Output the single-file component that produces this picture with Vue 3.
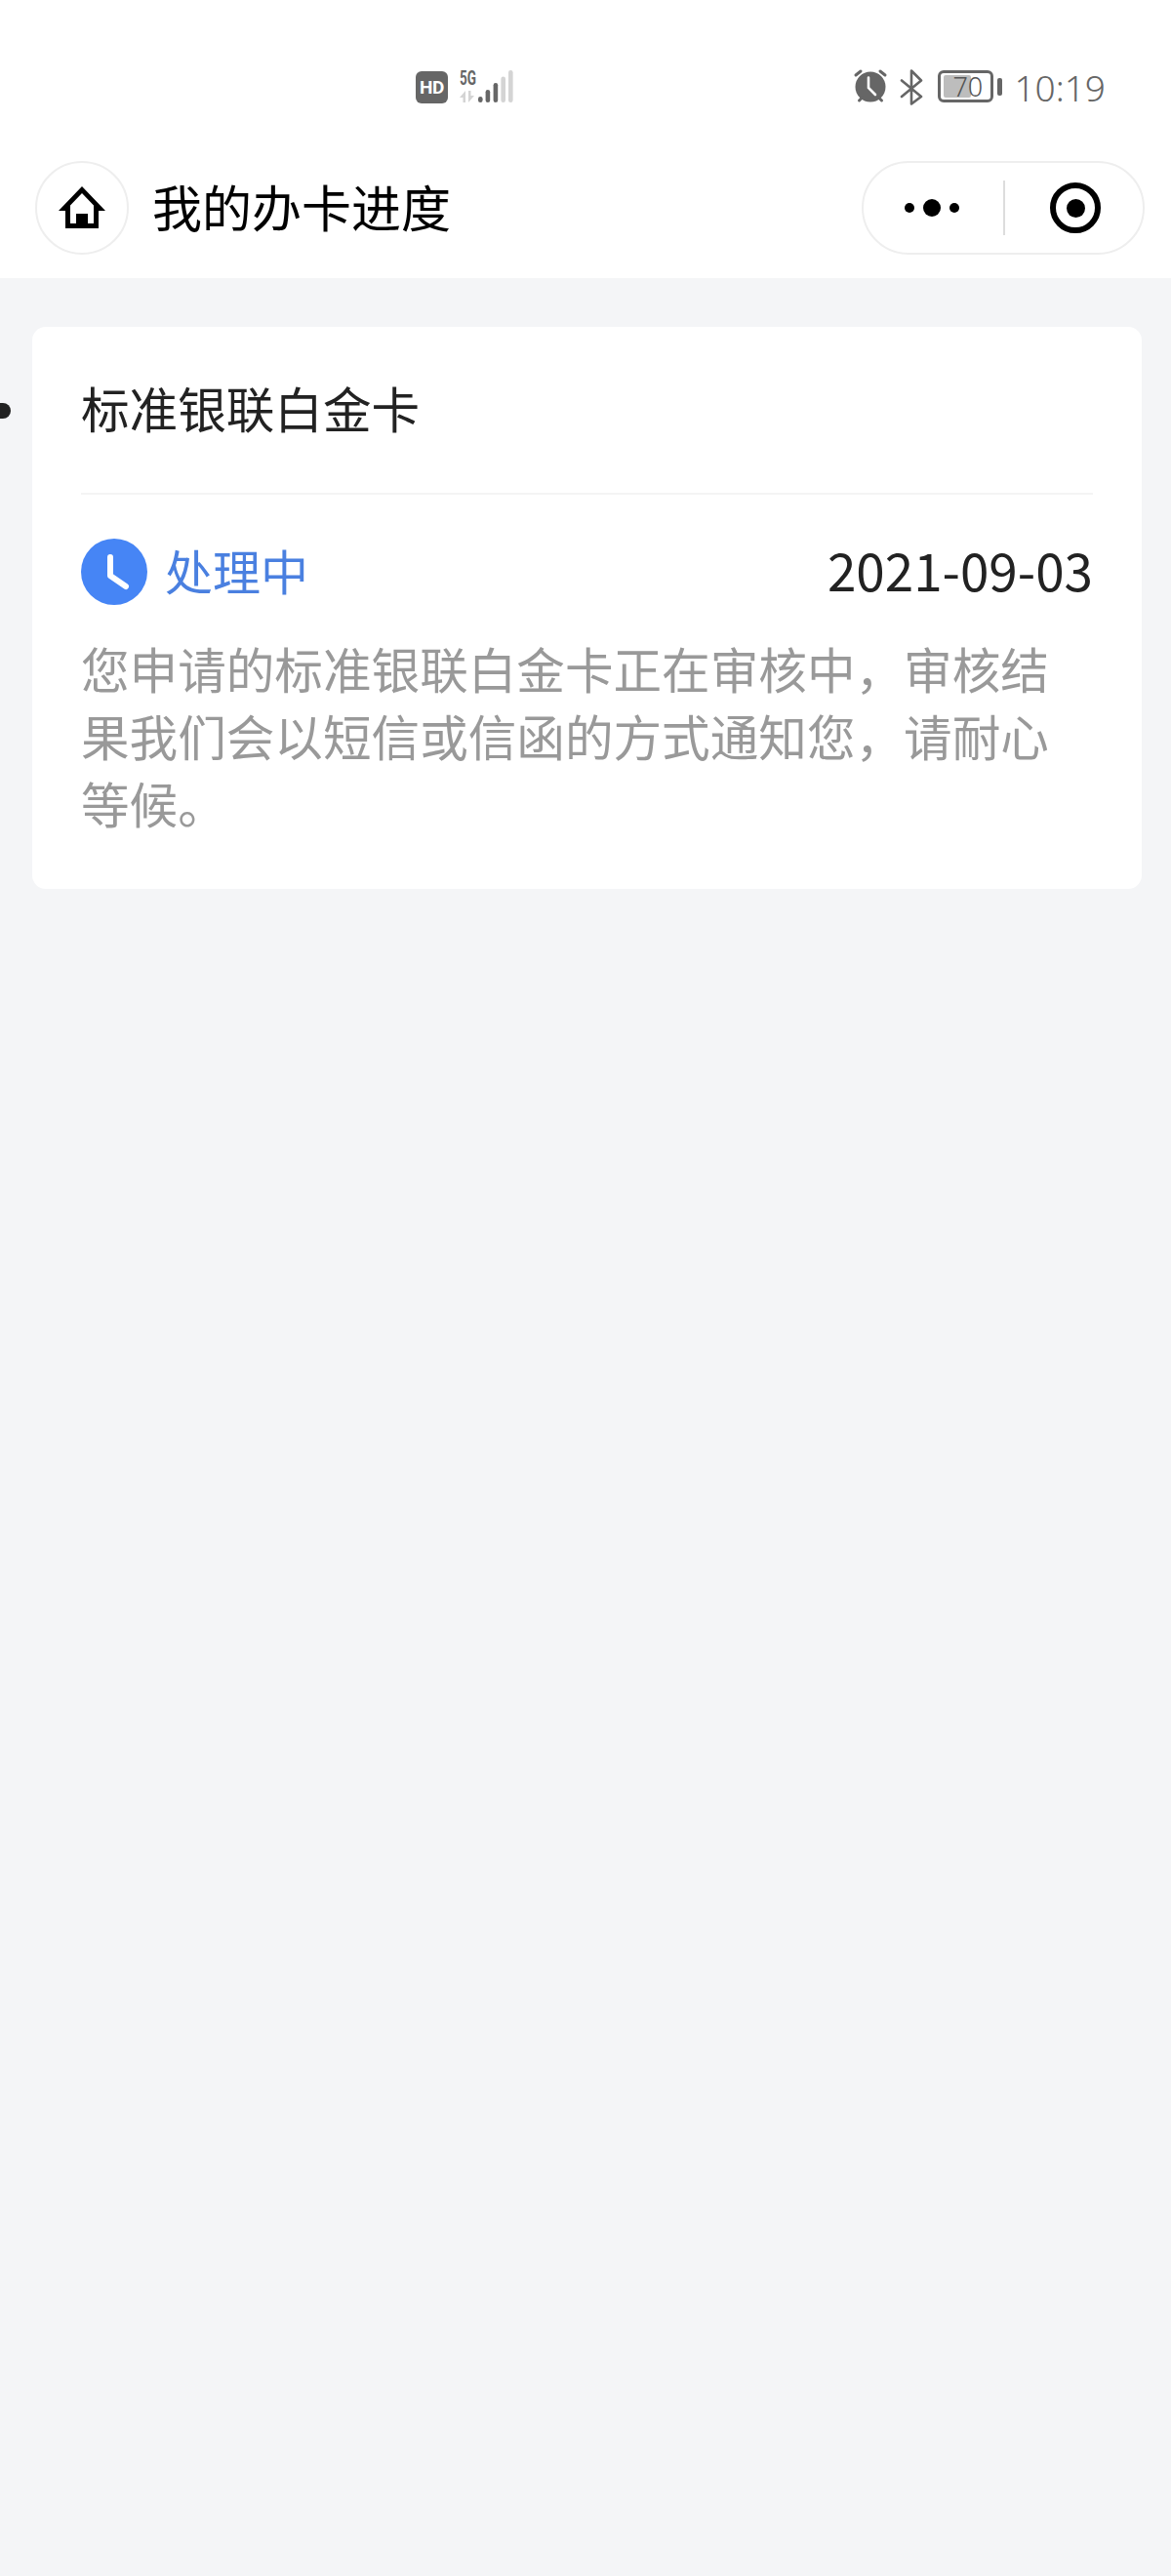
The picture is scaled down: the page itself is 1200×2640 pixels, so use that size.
<template>
  <div class="page">
    <header class="top">
      <div class="status">
        <span class="hd">HD</span>
        <svg class="signal" width="56" height="42" viewBox="0 0 56 42" aria-hidden="true">
          <text x="0" y="23" font-size="20" font-weight="700" fill="#666" font-family="Roboto, sans-serif" textLength="17" lengthAdjust="spacingAndGlyphs">5G</text>
          <g transform="translate(0 6)">
            <path d="M6 23V35H3.500V30H0ZM9 35V23H11.500V28H15Z" fill="#d4d4d4" />
            <rect x="19" y="29" width="4.600" height="6" rx="2.300" fill="#666" />
            <rect x="26.600" y="22" width="4.600" height="13" rx="2.300" fill="#666" />
            <rect x="34.600" y="15" width="4.600" height="20" rx="2.300" fill="#666" />
            <rect x="42.400" y="8.500" width="4.600" height="26.500" rx="2.300" fill="#d4d4d4" />
            <rect x="50" y="2" width="4.600" height="33" rx="2.300" fill="#d4d4d4" />
          </g>
        </svg>
        <div class="status__right">
          <svg width="36" height="36" viewBox="0 0 36 36" aria-hidden="true">
            <circle cx="18" cy="19" r="15.500" fill="#666" />
            <path d="M3 7l5-4M33 7l-5-4M6.500 33l3-3M29.500 33l-3-3" stroke="#666" stroke-width="3" stroke-linecap="round" />
            <path d="M16 9.500V20l7 7" fill="none" stroke="#fff" stroke-width="2.600" stroke-linecap="round" />
          </svg>
          <svg class="bt" width="24" height="37" viewBox="0 0 24 37" aria-hidden="true">
            <path d="M2 11.500L22 28L12 35.500V1.500L22 11.500L2 28" fill="none" stroke="#666" stroke-width="2.600" stroke-linecap="round" stroke-linejoin="round" />
          </svg>
          <div class="battery">
            <div class="battery__body">
              <span class="battery__fill"></span>
              <span class="battery__num">70</span>
            </div>
            <span class="battery__nub"></span>
          </div>
          <span class="time">10:19</span>
        </div>
      </div>

      <nav class="nav">
        <button class="nav__home" type="button" aria-label="home">
          <svg width="48" height="44" viewBox="0 0 48 44" aria-hidden="true">
            <path fill-rule="evenodd" d="M24 0L48 25H41V43H7V25H0ZM24 7L12 19.500V38H18V28H30V38H36V19.500Z" />
          </svg>
        </button>
        <h1 class="nav__title">我的办卡进度</h1>
        <div class="capsule">
          <div class="capsule__more">
            <i class="dot"></i><i class="dot dot--big"></i><i class="dot"></i>
          </div>
          <span class="capsule__line"></span>
          <div class="capsule__close"><i></i></div>
        </div>
      </nav>
    </header>

    <main class="content">
      <span class="bullet"></span>
      <section class="card">
        <h2 class="card__title">{{ card.title }}</h2>
        <div class="card__row">
          <div class="state">
            <svg width="68" height="68" viewBox="0 0 68 68" aria-hidden="true">
              <circle cx="34" cy="34" r="34" fill="#4685f5" />
              <path d="M30 19V38L46 49" fill="none" stroke="#fff" stroke-width="6" stroke-linecap="round" stroke-linejoin="round" />
            </svg>
            <span>{{ card.state }}</span>
          </div>
          <span class="date">{{ card.date }}</span>
        </div>
        <p class="card__desc">{{ card.desc }}</p>
      </section>
    </main>
  </div>
</template>

<script setup>
const card = {
  title: "标准银联白金卡",
  state: "处理中",
  date: "2021-09-03",
  desc: "您申请的标准银联白金卡正在审核中，审核结果我们会以短信或信函的方式通知您，请耐心等候。",
};
</script>

<style>
html,
body {
  margin: 0;
  background: #f4f5f7;
}
</style>

<style scoped>
.page {
  min-height: 2640px;
  background: #f4f5f7;
  font-family: "Noto Sans CJK SC", "Noto Sans", sans-serif;
  color: #222;
}

.top {
  background: #fff;
  height: 285px;
}

.status {
  display: flex;
  align-items: flex-start;
  height: 165px;
  box-sizing: border-box;
  padding: 70px 67px 0 426px;
}

.hd {
  width: 33px;
  height: 33px;
  margin-top: 3px;
  border-radius: 6px;
  background: #666;
  color: #fff;
  font: 700 19px/33px Roboto, sans-serif;
  letter-spacing: -0.5px;
  text-align: center;
}

.signal {
  margin-left: 12px;
  margin-top: -6px;
}

.status__right {
  display: flex;
  align-items: flex-start;
  margin-left: auto;
}

.bt {
  margin-left: 12px;
  margin-top: 1px;
}

.battery {
  display: flex;
  align-items: center;
  margin-left: 15px;
  margin-top: 2px;
}

.battery__body {
  position: relative;
  width: 57px;
  height: 33px;
  box-sizing: border-box;
  border: 3px solid #666;
  border-radius: 6px;
}

.battery__fill {
  position: absolute;
  left: 3px;
  top: 2px;
  width: 28px;
  height: 23px;
  border-radius: 2px;
  background: #bdbdbd;
}

.battery__num {
  position: absolute;
  left: 12px;
  top: 0;
  font: 300 27px/27px "Noto Sans", sans-serif;
  color: #555;
}

.battery__nub {
  width: 5px;
  height: 18px;
  margin-left: 4px;
  border-radius: 2px;
  background: #666;
}

.time {
  margin-left: 12px;
  font: 300 37px/40px "Noto Sans", sans-serif;
  color: #666;
}

.nav {
  display: flex;
  align-items: center;
  height: 96px;
  padding: 0 27px 0 36px;
}

.nav__home {
  display: flex;
  align-items: center;
  justify-content: center;
  width: 96px;
  height: 96px;
  padding: 0;
  border: 2px solid #eee;
  border-radius: 50%;
  background: #fff;
  box-sizing: border-box;
}

.nav__title {
  margin: 0 0 4px 24px;
  font-size: 51px;
  line-height: 92px;
  font-weight: 400;
  color: #000;
}

.capsule {
  display: flex;
  align-items: center;
  width: 290px;
  height: 96px;
  margin-left: auto;
  box-sizing: border-box;
  border: 2px solid #eee;
  border-radius: 48px;
}

.capsule__more {
  display: flex;
  align-items: center;
  justify-content: center;
  gap: 9px;
  width: 143px;
  padding-right: 3px;
  box-sizing: border-box;
}

.dot {
  width: 10px;
  height: 10px;
  border-radius: 50%;
  background: #000;
}

.dot--big {
  width: 18px;
  height: 18px;
}

.capsule__line {
  width: 2px;
  height: 56px;
  background: #ddd;
}

.capsule__close {
  display: flex;
  align-items: center;
  justify-content: center;
  flex: 1;
  padding-left: 3px;
}

.capsule__close i {
  display: flex;
  align-items: center;
  justify-content: center;
  width: 52px;
  height: 52px;
  box-sizing: border-box;
  border: 6px solid #000;
  border-radius: 50%;
}

.capsule__close i::after {
  content: "";
  width: 19px;
  height: 19px;
  border-radius: 50%;
  background: #000;
}

.content {
  position: relative;
  padding: 50px 30px 0 33px;
}

.bullet {
  position: absolute;
  left: 0;
  top: 128px;
  width: 11px;
  height: 16px;
  border-radius: 0 8px 8px 0;
  background: #222;
}

.card {
  height: 576px;
  box-sizing: border-box;
  padding: 0 50px;
  background: #fff;
  border-radius: 14px;
}

.card__title {
  margin: 0;
  height: 172px;
  box-sizing: border-box;
  border-bottom: 2px solid #f4f4f4;
  font-size: 49.600px;
  line-height: 165px;
  font-weight: 400;
}

.card__row {
  display: flex;
  align-items: center;
  justify-content: space-between;
  margin-top: 45px;
  height: 68px;
}

.state {
  display: flex;
  align-items: center;
  gap: 18px;
  font-size: 49px;
  color: #4a80e0;
}

.state span {
  margin-bottom: 6px;
}

.date {
  margin-bottom: 6px;
  font-size: 53px;
  color: #222;
}

.card__desc {
  margin: 30px 0 0;
  font-size: 49.600px;
  line-height: 69px;
  color: #999;
}
</style>
